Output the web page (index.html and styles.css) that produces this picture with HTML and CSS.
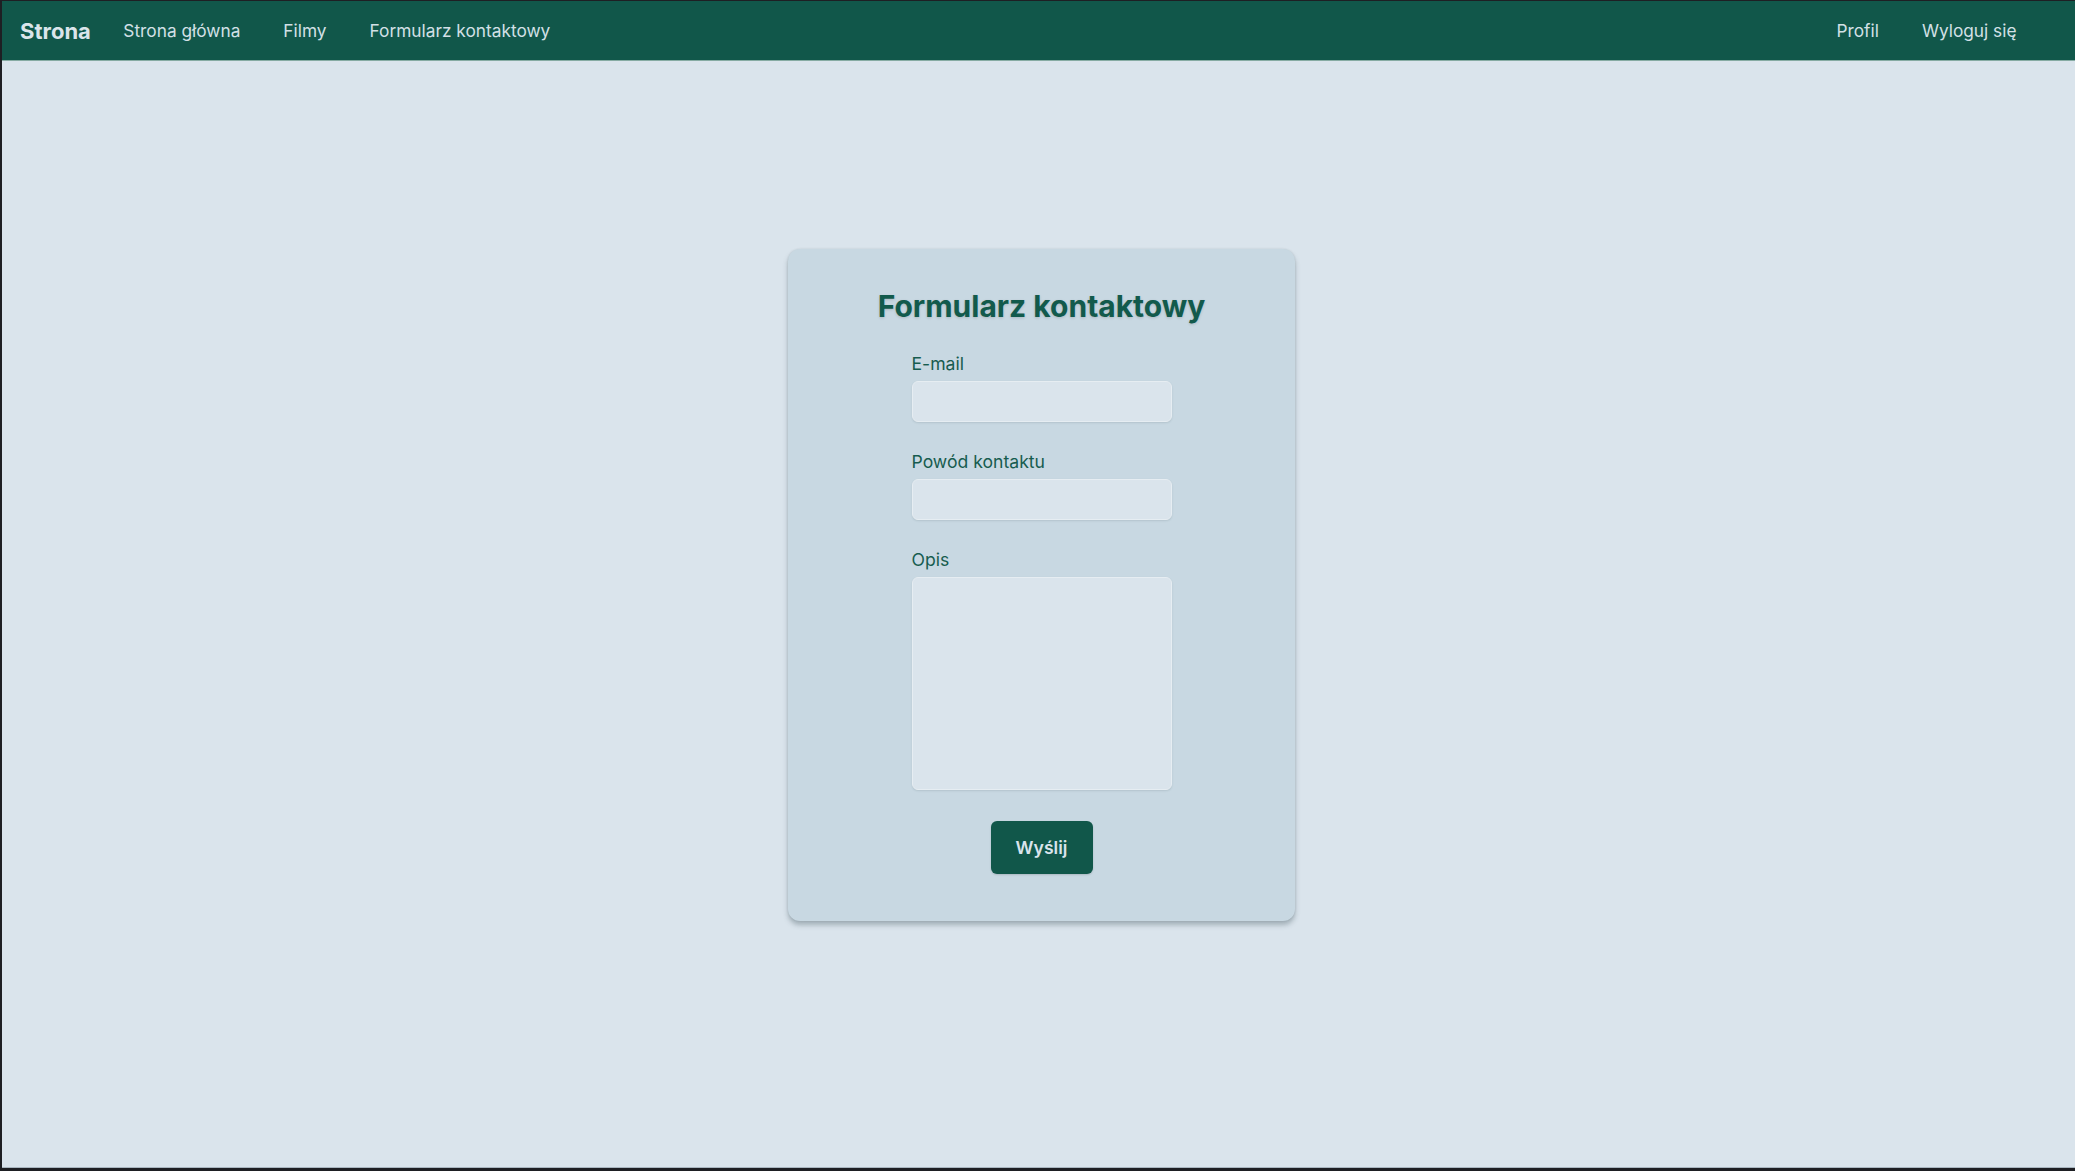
FILE: index.html
```html
<!DOCTYPE html>
<html lang="pl">
<head>
<meta charset="utf-8">
<title>Formularz kontaktowy</title>
<link rel="stylesheet" href="styles.css">
</head>
<body>
<div class="app">
  <nav class="navbar">
    <div class="nav-left">
      <a class="brand" href="#">Strona</a>
      <a class="nav-link" href="#">Strona główna</a>
      <a class="nav-link" href="#">Filmy</a>
      <a class="nav-link" href="#">Formularz kontaktowy</a>
    </div>
    <div class="nav-right">
      <a class="nav-link" href="#">Profil</a>
      <a class="nav-link" href="#">Wyloguj się</a>
    </div>
  </nav>
  <main class="main">
    <div class="card">
      <h1 class="title">Formularz kontaktowy</h1>
      <form class="form">
        <div class="field">
          <label class="label" for="email">E-mail</label>
          <input class="input" id="email" type="email">
        </div>
        <div class="field">
          <label class="label" for="reason">Powód kontaktu</label>
          <input class="input" id="reason" type="text">
        </div>
        <div class="field">
          <label class="label" for="desc">Opis</label>
          <textarea class="input textarea" id="desc"></textarea>
        </div>
        <button class="btn" type="button">Wyślij</button>
      </form>
    </div>
  </main>
</div>
</body>
</html>
```

FILE: styles.css
```css
* { box-sizing: border-box; }
html, body { height: 100%; }
body {
  margin: 0;
  padding: 1px 0 3px 2px;
  background: #1e1f23;
  font-family: Inter, "Noto Sans", sans-serif;
}
.app {
  height: 100%;
  display: flex;
  flex-direction: column;
  background: #dae4ec;
  border-bottom: 1px solid #a9b6c0;
}
.navbar {
  height: 60px;
  flex: none;
  background: #11574a;
  border-bottom: 1px solid #86aba3;
  display: flex;
  align-items: center;
  justify-content: space-between;
  padding: 0 37px 0 18px;
}
.nav-left, .nav-right { display: flex; align-items: center; }
.brand {
  color: #dbe5eb;
  font-weight: 700;
  font-size: 22px;
  text-decoration: none;
  margin-right: 11px;
}
.nav-link {
  color: #d3e0e6;
  font-size: 17.3px;
  text-decoration: none;
  padding: 0 21.5px;
}
.main {
  flex: 1;
  display: flex;
  justify-content: center;
  align-items: flex-start;
  padding-top: 188px;
  padding-left: 6px;
}
.card {
  width: 507px;
  background: #c8d8e2;
  border-radius: 12px;
  box-shadow: 0 4px 5px rgba(60, 80, 90, 0.35), 0 0 2px rgba(60, 80, 90, 0.15);
  padding: 39px 0 47px;
  display: flex;
  flex-direction: column;
  align-items: center;
}
.title {
  margin: 0 0 27px;
  font-size: 30px;
  line-height: 36px;
  font-weight: 700;
  color: #125a4c;
  text-shadow: 0 1px 3px rgba(0, 0, 0, 0.15);
}
.form {
  display: flex;
  flex-direction: column;
  align-items: center;
}
.field {
  width: 260px;
  display: flex;
  flex-direction: column;
  margin-bottom: 27px;
}
.field:last-of-type { margin-bottom: 31px; }
.label {
  font-size: 17.6px;
  line-height: 26px;
  color: #175c4f;
  margin-bottom: 4px;
}
.input {
  height: 41px;
  background: #dae4ec;
  border: 1px solid #e6edf2;
  border-radius: 6px;
  box-shadow: 0 1px 2px rgba(60, 80, 90, 0.15);
  font-family: inherit;
  font-size: 17px;
  outline: none;
}
.textarea {
  height: 213px;
  resize: none;
}
.btn {
  width: 102px;
  height: 53px;
  background: #11574a;
  color: #dae4ec;
  border: none;
  border-radius: 6px;
  font-family: inherit;
  font-weight: 600;
  font-size: 17.6px;
  box-shadow: 0 1px 2px rgba(0, 0, 0, 0.15);
}
```
